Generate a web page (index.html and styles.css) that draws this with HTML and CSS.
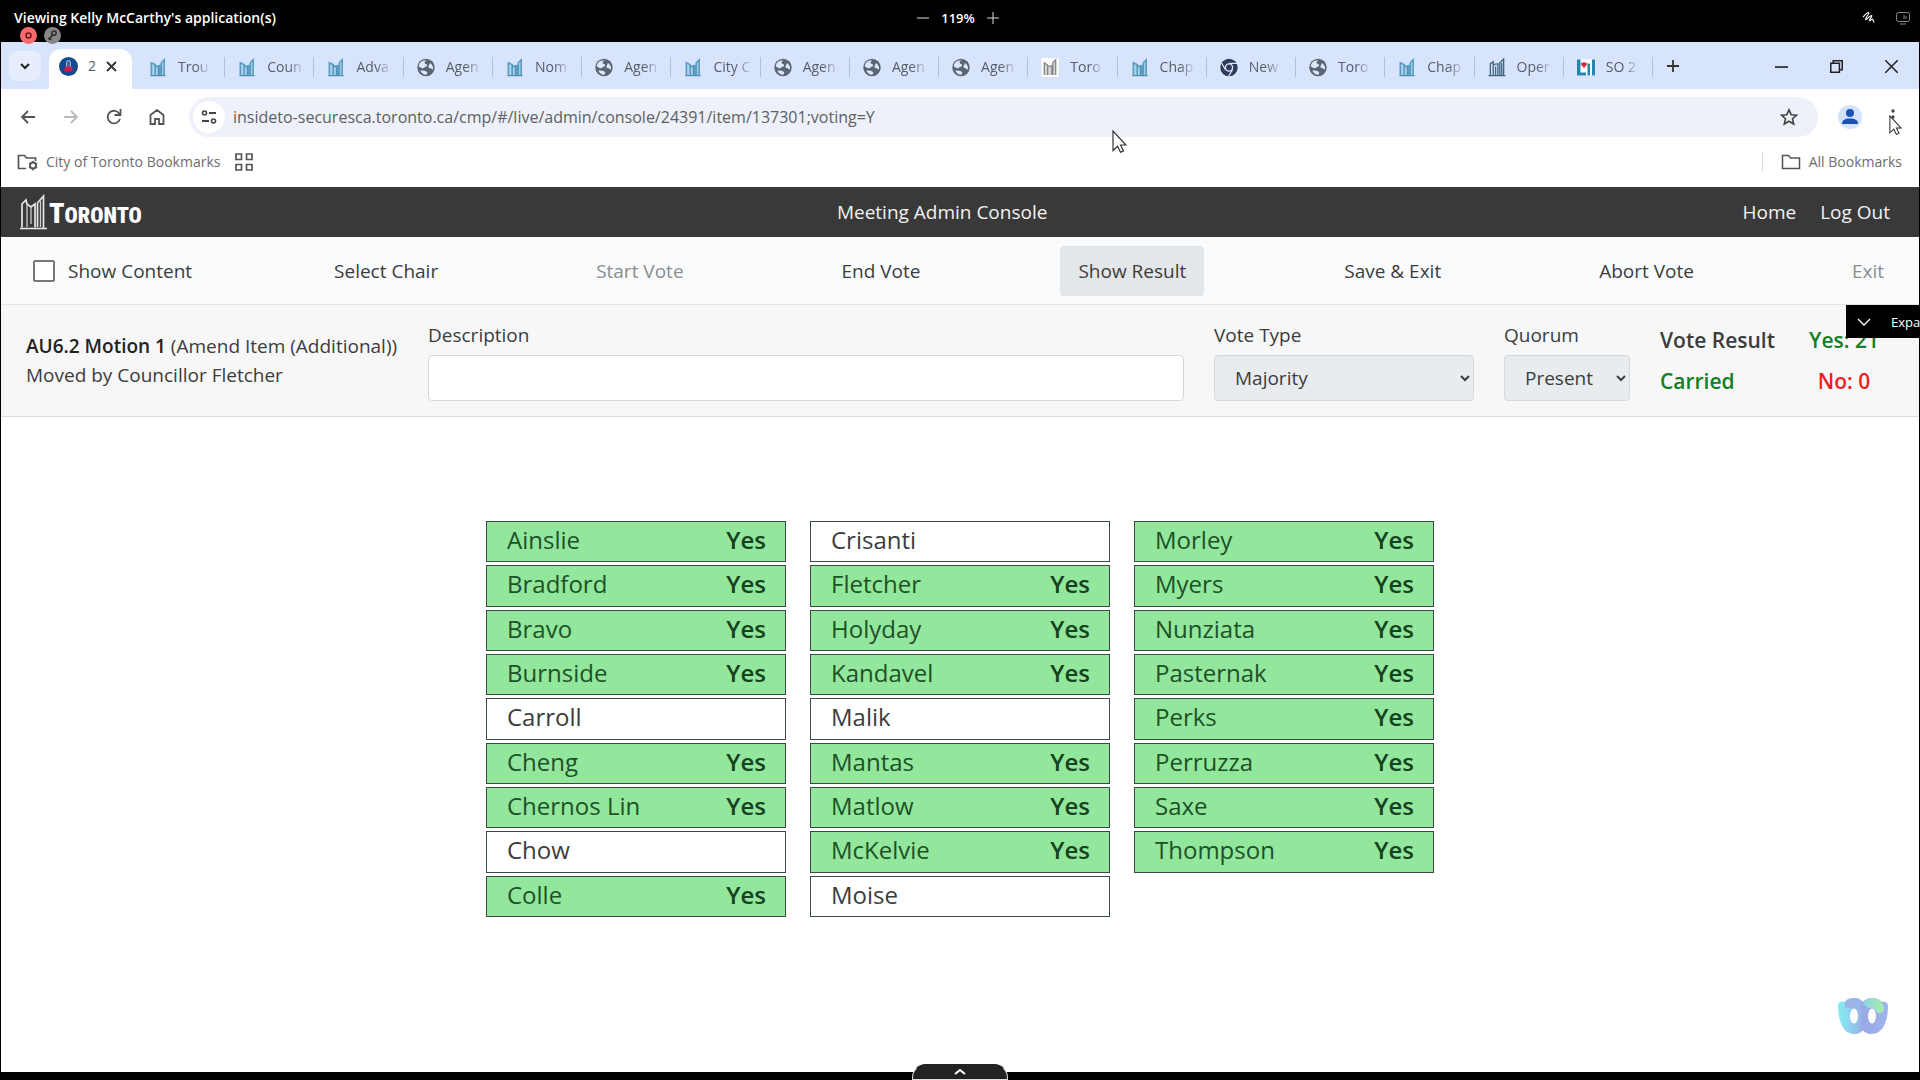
FILE: index.html
```html
<!DOCTYPE html>
<html lang="en">
<head>
<meta charset="utf-8">
<title>Meeting Admin Console</title>
<link rel="stylesheet" href="styles.css">
</head>
<body>
<svg class="sprite" aria-hidden="true">
  <symbol id="towers" viewBox="0 0 18 20"><path d="M2 18V5l4 2 1 2 4-1V18M12.500 18V5l3-3v16" fill="#a9d3ea" stroke="#5b9dc1" stroke-width="1.700"/><path d="M6 8v10M1 18.500h16M9.500 9v9" stroke="#4d8fb3" stroke-width="1.400"/></symbol>
  <symbol id="towers-grey" viewBox="0 0 18 20"><path d="M0 0h18v20H0z" fill="#fff"/><path d="M3 18V5l3 2 1 2 4-1V18M12 18V5l3-3v16M6.500 8v10" fill="#d5d5d2" stroke="#85878a" stroke-width="1.400"/></symbol>
  <symbol id="towers-dark" viewBox="0 0 18 20"><path d="M2 18V6l3-2v3l5-1v12M12 18V5l4-4v17M5 7v11M7.500 9v9M14 5v13M0 18.500h18" fill="none" stroke="#40667f" stroke-width="1.400"/></symbol>
  <symbol id="globe" viewBox="0 0 18 18"><circle cx="9" cy="9" r="8.700" fill="#5b6472"/><path d="M9.500 1.800c-1.500 1-2.500 2-1.500 3.200 1 .8 2 .2 2 1.800 0 1.300-1 1.200-2 1.700-1.200.6-1.300 1.500-3 1.200C3.600 9.400 2.500 8.300 1.800 8 1.800 4.400 5 1.500 9.500 1.800zM13 4.500c2.200 1.500 3.500 3.800 3 6.500-1.500-.3-1.800-1.600-3.400-1.600-1.200 0-1.500-1.400-.8-2.400.6-.8.7-1.700 1.200-2.500zM4.500 12c1.500-.2 3.500.2 5 1 1.200.7.800 2-.2 3.200-2.500.2-5-1.500-6-4.200z" fill="#dbe6fb"/></symbol>
  <symbol id="chrome" viewBox="0 0 18 18"><circle cx="9" cy="9" r="8.700" fill="#2f3b57"/><circle cx="9" cy="9" r="4.200" fill="#dbe6fb"/><circle cx="9" cy="9" r="2.900" fill="#2f3b57"/><path d="M9 4.800h8M5.400 11.100 1.600 4.500M12.600 11.100 8.500 17.800" stroke="#dbe6fb" stroke-width="1.200"/></symbol>
  <symbol id="cursor" viewBox="0 0 15 23"><path d="M1 1v19.500l4.500-4.200 3 6 3-1.400-2.900-5.900h5.400z" fill="#fff" stroke="#333" stroke-width="1.200"/></symbol>
</svg>

<header class="share-bar">
  <p class="share-title">Viewing Kelly McCarthy's application(s)</p>
  <div class="share-zoom">
    <button type="button" aria-label="Zoom out"><svg width="12" height="12" viewBox="0 0 12 12"><path d="M0 6h12" stroke="#ddd"/></svg></button>
    <span>119%</span>
    <button type="button" aria-label="Zoom in"><svg width="12" height="12" viewBox="0 0 12 12"><path d="M0 6h12M6 0v12" stroke="#ddd"/></svg></button>
  </div>
  <div class="share-tools">
    <button type="button" aria-label="Annotate"><svg width="14" height="14" viewBox="0 0 14 14"><path d="M1 6c2-2 4-5 5.500-4.500S3 7.500 3.500 8.500 8 4.500 9.500 4.500 7 8.500 7.500 9.500s2-1.500 3-1.500 0 3 2 3" fill="none" stroke="#fff" stroke-width="1.100"/></svg></button>
    <button type="button" aria-label="Remote control"><svg width="14" height="14" viewBox="0 0 14 14"><rect x=".5" y="1.500" width="13" height="9" rx="2" fill="none" stroke="#888"/><path d="M4 13h6M8 4v4M10 5v3" stroke="#888"/></svg></button>
  </div>
  <div class="share-badges">
    <svg width="17" height="17" viewBox="0 0 17 17"><circle cx="8.500" cy="8.500" r="8.500" fill="#f7696c"/><circle cx="8.500" cy="8.500" r="2.500" fill="none" stroke="#64191b" stroke-width="1.500"/></svg>
    <svg width="17" height="17" viewBox="0 0 17 17"><circle cx="8.500" cy="8.500" r="8.500" fill="#868686"/><circle cx="10" cy="6" r="2.200" fill="none" stroke="#222" stroke-width="1.300"/><path d="M8.500 8 5 12.500M4 11l3 2" stroke="#222" stroke-width="1.500"/></svg>
  </div>
</header>

<div class="window">
  <div class="tab-strip">
    <button class="tab-search" type="button" aria-label="Search tabs"><svg width="10" height="8" viewBox="0 0 10 8"><path d="m1 2 4 4 4-4" fill="none" stroke="#222" stroke-width="2"/></svg></button>
    <div class="tab-active">
      <svg width="19" height="19" viewBox="0 0 19 19"><circle cx="9.500" cy="9.500" r="9.500" fill="#12488d"/><path d="M7.500 11V5.500a2 2 0 0 1 4 0V11" fill="#356ca5" stroke="#a8b8cc"/><path d="M6 9.500h7l1 5H5z" fill="#c8204a"/></svg>
      <span>2</span>
      <button type="button" aria-label="Close tab"><svg width="11" height="11" viewBox="0 0 11 11"><path d="m1 1 9 9M10 1l-9 9" stroke="#333" stroke-width="1.800"/></svg></button>
    </div>
    <nav class="tabs" aria-label="Open tabs">
      <a href="#"><svg><use href="#towers"/></svg><span>Trou</span></a>
      <a href="#"><svg><use href="#towers"/></svg><span>Coun</span></a>
      <a href="#"><svg><use href="#towers"/></svg><span>Adva</span></a>
      <a href="#"><svg><use href="#globe"/></svg><span>Agen</span></a>
      <a href="#"><svg><use href="#towers"/></svg><span>Nom</span></a>
      <a href="#"><svg><use href="#globe"/></svg><span>Agen</span></a>
      <a href="#"><svg><use href="#towers"/></svg><span>City C</span></a>
      <a href="#"><svg><use href="#globe"/></svg><span>Agen</span></a>
      <a href="#"><svg><use href="#globe"/></svg><span>Agen</span></a>
      <a href="#"><svg><use href="#globe"/></svg><span>Agen</span></a>
      <a href="#"><svg><use href="#towers-grey"/></svg><span>Toro</span></a>
      <a href="#"><svg><use href="#towers"/></svg><span>Chap</span></a>
      <a href="#"><svg><use href="#chrome"/></svg><span>New</span></a>
      <a href="#"><svg><use href="#globe"/></svg><span>Toro</span></a>
      <a href="#"><svg><use href="#towers"/></svg><span>Chap</span></a>
      <a href="#"><svg><use href="#towers-dark"/></svg><span>Oper</span></a>
      <a href="#"><svg viewBox="0 0 18 18"><path d="M0 1h18v16H0z" fill="#fff"/><path d="M0 1h3.500v16H0zM3.500 14H9v3H3.500zM10.500 5h2.500v12h-2.500zM15 1h3v16h-3z" fill="#2486ad"/><path d="m7 3 1 1.500 2-.5-.5 3-2 1.500v1H6.500v-1l-2-1.500L4 4l2 .5z" fill="#d52942"/></svg><span>SO 2</span></a>
    </nav>
    <button class="new-tab" type="button" aria-label="New tab"><svg width="12" height="12" viewBox="0 0 12 12"><path d="M0 6h12M6 0v12" stroke="#333" stroke-width="1.800"/></svg></button>
    <div class="window-controls">
      <button type="button" aria-label="Minimize"><svg viewBox="0 0 12 12"><path d="M0 6.500h12" stroke="#222" stroke-width="1.500"/></svg></button>
      <button type="button" aria-label="Restore"><svg viewBox="0 0 12 12"><path d="M.7 3h8v8.300h-8zM3 3V.7h8.300V9H9" fill="none" stroke="#222" stroke-width="1.400"/></svg></button>
      <button type="button" aria-label="Close"><svg viewBox="0 0 12 12"><path d="m0 0 12 12M12 0 0 12" stroke="#222" stroke-width="1.400"/></svg></button>
    </div>
  </div>

  <div class="address-row">
    <div class="nav-buttons">
      <button type="button" aria-label="Back"><svg viewBox="0 0 16 16"><path d="M15 8H2M8 2 2 8l6 6" fill="none" stroke="#555" stroke-width="1.800"/></svg></button>
      <button type="button" aria-label="Forward"><svg viewBox="0 0 16 16"><path d="M1 8h13M8 2l6 6-6 6" fill="none" stroke="#bbb" stroke-width="1.800"/></svg></button>
      <button type="button" aria-label="Reload"><svg viewBox="0 0 16 16"><path d="M13.500 5A6.300 6.300 0 1 0 14 10M14.500 0v6H8.500" fill="none" stroke="#555" stroke-width="1.800"/></svg></button>
      <button type="button" aria-label="Home"><svg viewBox="0 0 16 16"><path d="M1.500 15V6L8 1l6.500 5v9H10v-5H6v5z" fill="none" stroke="#555" stroke-width="1.800"/></svg></button>
    </div>
    <div class="omnibox">
      <button class="site-info" type="button" aria-label="Site information"><svg width="16" height="16" viewBox="0 0 16 16"><path d="M8 4h7M1 12h7" stroke="#444" stroke-width="1.800"/><circle cx="3.500" cy="4" r="2" fill="none" stroke="#444" stroke-width="1.600"/><circle cx="12.500" cy="12" r="2" fill="none" stroke="#444" stroke-width="1.600"/></svg></button>
      <input type="text" aria-label="Address" value="insideto-securesca.toronto.ca/cmp/#/live/admin/console/24391/item/137301;voting=Y">
      <button type="button" aria-label="Bookmark this tab"><svg width="18" height="18" viewBox="0 0 18 18"><path d="m9 1.800 2.200 4.900 5.300.5-4 3.500 1.200 5.300L9 13.200 4.300 16l1.200-5.300-4-3.500 5.300-.5z" fill="none" stroke="#444" stroke-width="1.600"/></svg></button>
    </div>
    <button class="profile" type="button" aria-label="Profile"><svg width="16" height="16" viewBox="0 0 16 16"><circle cx="8" cy="4" r="4" fill="#1b50b5"/><path d="M0 15c0-4 3-5.500 8-5.500s8 1.500 8 5.500z" fill="#1b50b5"/></svg></button>
    <button class="menu" type="button" aria-label="Menu"><svg width="4" height="16" viewBox="0 0 4 16"><circle cx="2" cy="2" r="1.700" fill="#444"/><circle cx="2" cy="8" r="1.700" fill="#444"/><circle cx="2" cy="14" r="1.700" fill="#444"/></svg></button>
  </div>

  <nav class="bookmarks" aria-label="Bookmarks">
    <a href="#"><svg width="21" height="17" viewBox="0 0 21 17"><path d="M9 14.500H1.500v-13h6l2 2.500h9v3" fill="none" stroke="#555" stroke-width="1.700"/><circle cx="16" cy="11.500" r="3" fill="none" stroke="#555" stroke-width="1.800"/><path d="M16 7v2M16 14v2.500M12 9.300l1.500.9M18.500 13l1.600.9M12 13.800l1.500-.9M18.500 10.200l1.600-.9" stroke="#555" stroke-width="1.500"/></svg>City of Toronto Bookmarks</a>
    <a class="apps" href="#" aria-label="Apps"><svg width="18" height="18" viewBox="0 0 18 18"><path d="M1 1h5.500v5.500H1zM11.500 1H17v5.500h-5.500zM1 11.500h5.500V17H1zM11.500 11.500H17V17h-5.500z" fill="none" stroke="#555" stroke-width="1.700"/></svg></a>
    <a class="all-bookmarks" href="#"><svg width="20" height="16" viewBox="0 0 20 16"><path d="M1.500 14.500v-13h6l2 2.500h9v10.500z" fill="none" stroke="#555" stroke-width="1.500"/></svg>All Bookmarks</a>
  </nav>

  <header class="site-header">
    <a class="logo" href="#"><svg width="27" height="36" viewBox="0 0 27 36"><path d="M2 33.500V10l4-4 1 4 4 3 4-3v23.500M17.500 33V9l6-7v32" fill="none" stroke="#e4e4e4" stroke-width="1.700"/><path d="M7 10v23M11 13v17M20.500 7v26" fill="none" stroke="#ccc" stroke-width="1.300"/><path d="M0 34.500h27" stroke="#e4e4e4" stroke-width="1.600"/></svg><span><b>T</b>ORONTO</span></a>
    <h1>Meeting Admin Console</h1>
    <nav><a href="#">Home</a><a href="#">Log Out</a></nav>
  </header>

  <div class="actions">
    <label><input type="checkbox">Show Content</label>
    <button type="button">Select Chair</button>
    <button type="button" disabled>Start Vote</button>
    <button type="button">End Vote</button>
    <button class="is-current" type="button">Show Result</button>
    <button type="button">Save &amp; Exit</button>
    <button type="button">Abort Vote</button>
    <button type="button" disabled>Exit</button>
  </div>

  <section class="motion">
    <p class="motion-title"><b>AU6.2 Motion 1</b> (Amend Item (Additional))<br>Moved by Councillor Fletcher</p>
    <div class="field description"><label for="description">Description</label><input id="description" type="text"></div>
    <div class="field vote-type"><label for="vote-type">Vote Type</label><select id="vote-type"><option>Majority</option></select></div>
    <div class="field quorum"><label for="quorum">Quorum</label><select id="quorum"><option>Present</option></select></div>
    <div class="result">
      <span>Vote Result</span><span class="yes">Yes: 21</span>
      <span class="yes">Carried</span><span class="no">No: 0</span>
    </div>
    <button class="expand" type="button"><svg width="14" height="8" viewBox="0 0 14 8"><path d="m1 1 6 6 6-6" fill="none" stroke="#fff" stroke-width="1.300"/></svg><span>Expa</span></button>
  </section>

  <main class="votes">
    <ul>
      <li class="voted">Ainslie<b>Yes</b></li>
      <li class="voted">Bradford<b>Yes</b></li>
      <li class="voted">Bravo<b>Yes</b></li>
      <li class="voted">Burnside<b>Yes</b></li>
      <li>Carroll</li>
      <li class="voted">Cheng<b>Yes</b></li>
      <li class="voted">Chernos Lin<b>Yes</b></li>
      <li>Chow</li>
      <li class="voted">Colle<b>Yes</b></li>
    </ul>
    <ul>
      <li>Crisanti</li>
      <li class="voted">Fletcher<b>Yes</b></li>
      <li class="voted">Holyday<b>Yes</b></li>
      <li class="voted">Kandavel<b>Yes</b></li>
      <li>Malik</li>
      <li class="voted">Mantas<b>Yes</b></li>
      <li class="voted">Matlow<b>Yes</b></li>
      <li class="voted">McKelvie<b>Yes</b></li>
      <li>Moise</li>
    </ul>
    <ul>
      <li class="voted">Morley<b>Yes</b></li>
      <li class="voted">Myers<b>Yes</b></li>
      <li class="voted">Nunziata<b>Yes</b></li>
      <li class="voted">Pasternak<b>Yes</b></li>
      <li class="voted">Perks<b>Yes</b></li>
      <li class="voted">Perruzza<b>Yes</b></li>
      <li class="voted">Saxe<b>Yes</b></li>
      <li class="voted">Thompson<b>Yes</b></li>
    </ul>
  </main>
</div>

<svg class="pointer pointer-main"><use href="#cursor"/></svg>
<svg class="pointer pointer-menu"><use href="#cursor"/></svg>
<svg class="webex" viewBox="0 0 52 38">
  <defs>
    <linearGradient id="left-ring" x1="0" x2="1"><stop offset="0" stop-color="#86ecee"/><stop offset=".4" stop-color="#90d5f0"/><stop offset="1" stop-color="#98a9e6"/></linearGradient>
    <linearGradient id="right-ring" x1="0" x2="1"><stop offset="0" stop-color="#98a9e6"/><stop offset="1" stop-color="#a0b4ee"/></linearGradient>
    <linearGradient id="top-ring" x1="0" x2="1"><stop offset="0" stop-color="#8fd4e6"/><stop offset="1" stop-color="#a8efa6"/></linearGradient>
  </defs>
  <path d="M1 8c0-4 5-4 7-3 2-3 5-4 9-4 6 0 9 3 11 8v22c-3 4-6 6-11 6C5 37 1 22 1 8z" fill="url(#left-ring)"/>
  <path d="M8 5c2-3 5-4 9-4 6 0 9 3 11 8v6H17c0-4-5-6-9-4z" fill="#9db4e8"/>
  <path d="M24 9c2-5 5-8 11-8 5 0 8 2 10 4 3-1 6 0 6 4 0 13-4 28-16 28-5 0-8-2-11-6z" fill="url(#right-ring)"/>
  <path d="M26 7c2-4 5-6 9-6 7 0 12 5 12 12-2 4-6 4-8 1-2-4-5-4-8-3z" fill="url(#top-ring)"/>
  <ellipse cx="17" cy="19" rx="4" ry="7.500" fill="#fff"/>
  <ellipse cx="35" cy="19" rx="4" ry="7.500" fill="#fff"/>
</svg>
<button class="drawer" type="button" aria-label="Open meeting controls"><svg width="12" height="6" viewBox="0 0 12 6"><path d="m1 5 5-4 5 4" fill="none" stroke="#fff" stroke-width="2"/></svg></button>
</body>
</html>
```
FILE: styles.css
```css
* { box-sizing: border-box; }

body {
  margin: 0;
  min-height: 100vh;
  display: flex;
  flex-direction: column;
  position: relative;
  overflow-x: hidden;
  background: #000;
  color: #3c3c3c;
  font: 19px/28px "Open Sans", "Noto Sans", sans-serif;
}

button, input, select { font: inherit; color: inherit; }
button { padding: 0; border: 0; background: none; }
button svg, a svg { display: block; flex: none; }
a { color: inherit; text-decoration: none; }
h1, p, ul { margin: 0; padding: 0; }
.sprite { position: absolute; width: 0; height: 0; }

/* Screen-share bar */
.share-bar {
  display: grid;
  grid-template-columns: 1fr auto 1fr;
  align-items: center;
  height: 42px;
  padding: 0 10px 6px 14px;
  color: #fff;
  font-size: 14px;
  line-height: 20px;
  font-weight: 600;
}
.share-zoom { display: flex; align-items: center; gap: 12px; margin-right: 8px; font-size: 13px; }
.share-tools { display: flex; justify-content: flex-end; gap: 20px; }
.share-badges { position: absolute; left: 20px; top: 27px; display: flex; gap: 7px; }

/* Browser window */
.window {
  flex: 1;
  display: flex;
  flex-direction: column;
  margin: 0 1px 8px;
  background: #fff;
}
.tab-strip {
  display: flex;
  height: 47px;
  padding-top: 1px;
  background: #d8e4fc;
  color: #555d6b;
  font-size: 14px;
  line-height: 20px;
}
.tab-search {
  display: grid;
  place-items: center;
  flex: none;
  width: 32px;
  margin: 8px;
  border-radius: 8px;
  background: #e6eefd;
}
.tab-active {
  display: flex;
  align-items: center;
  gap: 10px;
  flex: none;
  width: 83px;
  margin-top: 6px;
  padding: 0 10px 6px;
  border-radius: 12px 12px 0 0;
  background: #fff;
}
.tabs { flex: 1; min-width: 0; display: flex; margin-left: 4px; }
.tabs a {
  flex: 1 1 0;
  min-width: 0;
  display: flex;
  align-items: center;
  gap: 11px;
  height: 20px;
  margin: 14px 0;
  padding: 0 10px 0 13px;
  border-right: 1px solid #b0bfdb;
}
.tabs svg { width: 18px; height: 19px; }
.tabs span {
  white-space: nowrap;
  mask-image: linear-gradient(90deg, #000 60%, #0003);
}
.new-tab { margin: 0 96px 0 14px; }
.window-controls { display: flex; gap: 42px; padding-right: 21px; }
.window-controls svg { width: 13px; height: 13px; }

.address-row {
  display: flex;
  align-items: center;
  height: 56px;
  padding: 0 24px 0 19px;
}
.nav-buttons { display: flex; gap: 27px; }
.nav-buttons svg { width: 16px; height: 16px; }
.omnibox {
  flex: 1;
  display: flex;
  align-items: center;
  height: 40px;
  margin: 0 20px 0 24px;
  padding: 0 20px 0 4px;
  border-radius: 20px;
  background: #eef1f9;
}
.site-info {
  display: grid;
  place-items: center;
  width: 32px;
  height: 32px;
  border-radius: 50%;
  background: #fff;
}
.omnibox input {
  flex: 1;
  min-width: 0;
  padding: 0 8px;
  border: 0;
  background: none;
  color: #5c5f63;
  font-size: 16px;
}
.profile {
  display: grid;
  place-items: center;
  width: 24px;
  height: 24px;
  margin-right: 29px;
  border-radius: 50%;
  background: #d3e3fd;
}

.bookmarks {
  display: flex;
  align-items: center;
  height: 42px;
  padding: 0 17px 8px 16px;
  color: #6c6c6c;
  font-size: 14px;
  line-height: 20px;
}
.bookmarks a { display: flex; align-items: center; gap: 8px; }
.bookmarks .apps { margin-left: 15px; }
.bookmarks .all-bookmarks {
  margin-left: auto;
  padding-left: 18px;
  border-left: 1px solid #d5def0;
}

/* Site header */
.site-header {
  display: flex;
  align-items: center;
  justify-content: space-between;
  height: 50px;
  padding: 0 29px 0 19px;
  background: #393939;
  color: #f2f2f2;
}
.site-header h1 { font-size: 19px; font-weight: 500; }
.site-header nav { display: flex; gap: 24px; font-weight: 500; }
.logo { display: flex; align-items: flex-end; gap: 2px; }
.logo span {
  color: #fff;
  font: 900 22px/28px "Roboto Condensed", "Open Sans Condensed", "Open Sans", sans-serif;
}
.logo b { font-size: 28px; font-weight: 900; }

/* Action bar */
.actions {
  display: flex;
  align-items: center;
  justify-content: space-between;
  height: 68px;
  padding: 0 17px 0 32px;
  border-bottom: 1px solid #e4e5e6;
  background: #fafbfc;
}
.actions label { display: flex; align-items: center; gap: 13px; margin-right: 2px; }
.actions input {
  appearance: none;
  width: 22px;
  height: 22px;
  margin: 0;
  border: 2px solid #777;
  border-radius: 2px;
  background: #fff;
}
.actions button { height: 50px; padding: 0 18px; border-radius: 4px; }
.actions button:disabled { color: #8b8d90; }
.actions .is-current { background: #e4e7ea; }

/* Motion details */
.motion {
  position: relative;
  display: flex;
  gap: 30px;
  height: 112px;
  padding: 16px 31px 0 25px;
  border-bottom: 1px solid #dcdddf;
  background: #f7f7f8;
}
.motion-title { width: 372px; padding-top: 11px; white-space: nowrap; line-height: 29px; }
.motion-title b { font-weight: 600; color: #222; }
.field { display: flex; flex-direction: column; gap: 6px; }
.description { flex: 1; }
.vote-type { width: 260px; }
.quorum { width: 126px; }
.field input, .field select {
  width: 100%;
  height: 46px;
  padding: 0 16px;
  border: 1px solid #d5d8dc;
  border-radius: 4px;
  background: #fff;
}
.field select { background: #e9ecef; }
.result {
  display: grid;
  grid-template-columns: 140px 88px;
  align-content: start;
  row-gap: 13px;
  padding-top: 5px;
  font-size: 21px;
  font-weight: 600;
}
.result span:nth-child(even) { text-align: center; }
.yes { color: #118022; }
.no { color: #f02020; }
.expand {
  position: absolute;
  right: -1px;
  top: 0;
  display: flex;
  align-items: center;
  gap: 20px;
  width: 74px;
  height: 33px;
  padding-left: 11px;
  overflow: hidden;
  background: #000;
  color: #fff;
  font-size: 13px;
}

/* Vote grid */
.votes {
  display: grid;
  grid-template-columns: repeat(3, 300px);
  justify-content: center;
  gap: 24px;
  padding: 104px 0 40px;
  font-size: 24px;
  line-height: 32px;
}
.votes ul {
  display: grid;
  grid-template-rows: repeat(9, 1fr);
  gap: 3px;
  min-height: 396px;
  list-style: none;
}
.votes li {
  display: flex;
  justify-content: space-between;
  padding: 2px 19px 0 20px;
  border: 1px solid #3a4a45;
  background: #fff;
}
.votes .voted { background: #92e79c; color: #1d5128; }
.votes b { color: #17421f; font-weight: 600; }

/* Overlays */
.pointer { position: absolute; width: 15px; height: 23px; }
.pointer-main { left: 1112px; top: 130px; }
.pointer-menu { right: 18px; top: 115px; width: 13px; height: 20px; }
.webex { position: absolute; right: 31px; bottom: 45px; width: 52px; height: 38px; }
.drawer {
  position: absolute;
  left: 50%;
  bottom: 0;
  display: grid;
  place-items: center;
  width: 96px;
  height: 16px;
  margin-left: -48px;
  border: 1px solid #ddd;
  border-top-color: #222;
  border-radius: 14px 14px 0 0;
  background: #222;
}
```
